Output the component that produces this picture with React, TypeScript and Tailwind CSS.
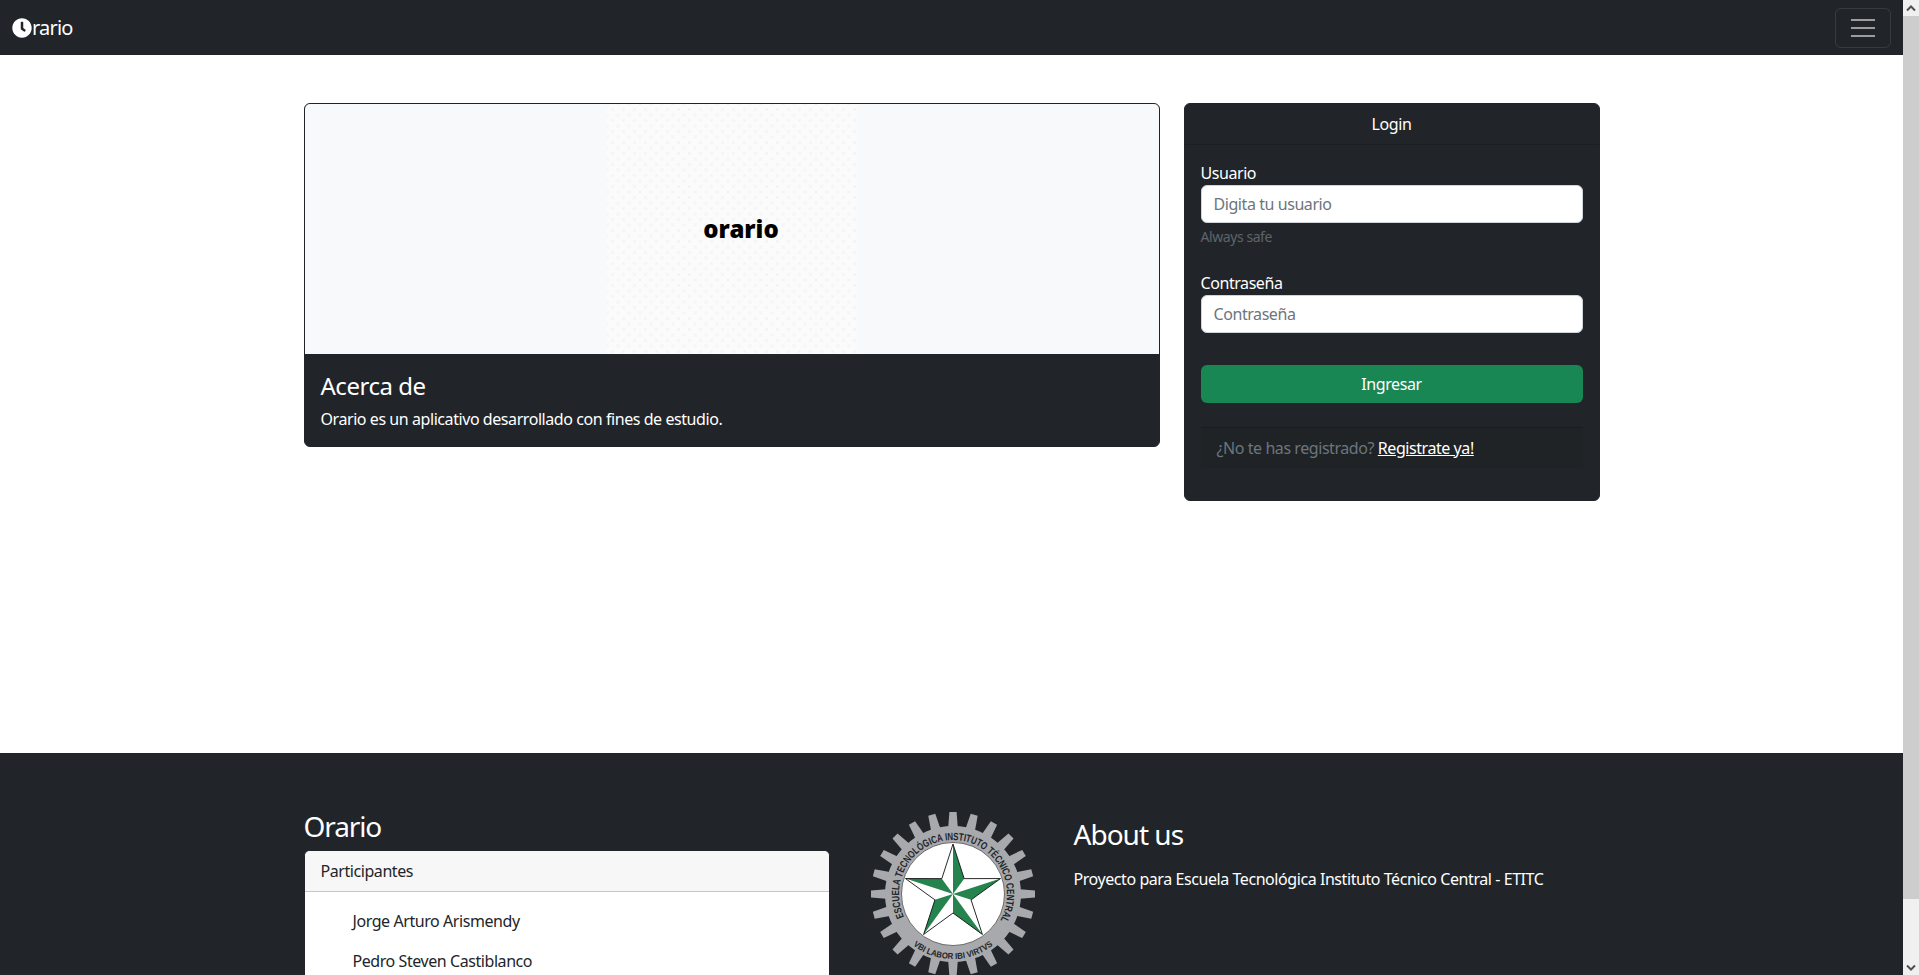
import { FaClock } from "react-icons/fa";

const cx = 85;
const cy = 85;
const pt = (r: number, deg: number): [number, number] => {
  const a = (deg * Math.PI) / 180;
  return [cx + r * Math.cos(a), cy + r * Math.sin(a)];
};
const p2s = (ps: [number, number][]) => ps.map((p) => p.map((v) => v.toFixed(2)).join(",")).join(" ");

function Logo() {
  const teeth = Array.from({ length: 24 }, (_, i) => i * 15);
  const starAngles = [-90, -18, 54, 126, 198];
  const R = 50;
  const r = 19;
  const starOutline: [number, number][] = [];
  starAngles.forEach((a) => {
    starOutline.push(pt(R, a));
    starOutline.push(pt(r, a + 36));
  });
  return (
    <svg width="170" height="170" viewBox="0 0 170 170" className="shrink-0">
      {teeth.map((d) => (
        <polygon key={d} points={`${cx - 5},${cy - 64} ${cx - 3.6},${cy - 82} ${cx + 3.6},${cy - 82} ${cx + 5},${cy - 64}`} fill="#a7a9ac" transform={`rotate(${d} ${cx} ${cy})`} />
      ))}
      <circle cx={cx} cy={cy} r="68" fill="#a7a9ac" />
      <circle cx={cx} cy={cy} r="51.5" fill="#ffffff" stroke="#222" strokeWidth="0.6" />
      {starAngles.map((a) => (
        <polygon key={a} points={p2s([[cx, cy], pt(R, a), pt(r, a + 36)])} fill="#25834e" />
      ))}
      <polygon points={p2s(starOutline)} fill="none" stroke="#111" strokeWidth="0.9" />
      <defs>
        <path id="ringTop" d={`M ${pt(54, 155).join(" ")} A 54 54 0 1 1 ${pt(54, 27).join(" ")}`} />
        <path id="ringBottom" d={`M ${pt(65, 128).join(" ")} A 65 65 0 0 0 ${pt(65, 50).join(" ")}`} />
      </defs>
      <text fontFamily="'Liberation Sans', sans-serif" fontSize="10.5" fontWeight="700" fill="#222529" letterSpacing="0">
        <textPath href="#ringTop" textLength="220" lengthAdjust="spacingAndGlyphs">ESCUELA TECNOLÓGICA INSTITUTO TÉCNICO CENTRAL</textPath>
      </text>
      <text fontFamily="'Liberation Sans', sans-serif" fontSize="8.5" fontWeight="700" fill="#222529" letterSpacing="0">
        <textPath href="#ringBottom" textLength="86" lengthAdjust="spacingAndGlyphs">VBI LABOR IBI VIRTVS</textPath>
      </text>
    </svg>
  );
}

function Scrollbar() {
  return (
    <div className="flex w-[16px] shrink-0 flex-col bg-[#f0f0f0]">
      <div className="flex h-[16px] items-center justify-center">
        <svg width="10" height="7" viewBox="0 0 10 7"><path d="M1 5.5 5 1.5 9 5.5" fill="none" stroke="#505050" strokeWidth="2" /></svg>
      </div>
      <div className="h-[883px] bg-[#cdcdcd]" />
      <div className="flex-1" />
      <div className="flex h-[16px] items-center justify-center">
        <svg width="10" height="7" viewBox="0 0 10 7"><path d="M1 1.5 5 5.5 9 1.5" fill="none" stroke="#505050" strokeWidth="2" /></svg>
      </div>
    </div>
  );
}

export default function App() {
  return (
    <div className="flex h-[975px] w-full overflow-hidden bg-white font-['Noto_Sans',sans-serif] text-[16px] leading-[24px] tracking-[-0.027em] text-[#212529]">
      <div className="min-w-0 flex-1 overflow-hidden">
        <nav className="flex h-[55px] items-center justify-between bg-[#212529] pl-3 pr-3 text-white">
          <a className="flex items-center text-[20px] tracking-[-0.04em]">
            <FaClock className="h-5 w-5 text-white" />
            <span>rario</span>
          </a>
          <button className="flex h-[40px] w-[56px] flex-col items-center justify-center gap-[6px] rounded-md border border-white/10">
            <span className="h-[2px] w-6 bg-white/55" />
            <span className="h-[2px] w-6 bg-white/55" />
            <span className="h-[2px] w-6 bg-white/55" />
          </button>
        </nav>

        <main className="h-[698px] pt-12">
          <div className="mx-auto grid w-[1296px] grid-cols-[856px_416px] gap-6">
            <section className="self-start overflow-hidden rounded-md border border-[#212529] bg-[#212529] text-white">
              <div className="flex h-[250px] justify-center bg-[#f8f9fa]">
                <div className="flex w-[250px] items-center justify-center bg-[#fbfbfb] bg-[radial-gradient(#f5f5f5_1.5px,transparent_2px),radial-gradient(#f5f5f5_1.5px,transparent_2px)] bg-[length:11px_11px] bg-[position:0_0,5.5px_5.5px]">
                  <span className="ml-[19px] text-[24px] font-black tracking-normal text-black">orario</span>
                </div>
              </div>
              <div className="px-4 pb-[15px] pt-[17px]">
                <h5 className="mb-[7px] text-[24px] leading-[29px] tracking-[-0.02em]">Acerca de</h5>
                <p>Orario es un aplicativo desarrollado con fines de estudio.</p>
              </div>
            </section>

            <section className="h-[398px] rounded-md border border-[#212529] bg-[#212529] text-white">
              <div className="h-[41px] border-b border-black/15 py-2 text-center">Login</div>
              <div className="px-4 pt-4">
                <label className="block">Usuario</label>
                <input className="block h-[38px] w-full rounded-md border border-[#ced4da] bg-white px-3 text-[#212529] placeholder:text-[#6c757d]" placeholder="Digita tu usuario" />
                <div className="mt-[3px] text-[14px] leading-[21px] text-[#6c757d] opacity-80">Always safe</div>
                <label className="mt-[24px] block">Contraseña</label>
                <input className="block h-[38px] w-full rounded-md border border-[#ced4da] bg-white px-3 text-[#212529] placeholder:text-[#6c757d]" placeholder="Contraseña" />
                <button className="mt-8 h-[38px] w-full rounded-md bg-[#198754] text-center text-white">Ingresar</button>
                <div className="mt-6 h-[41px] border-t border-black/15 bg-black/5 px-4 py-2 text-[#6c757d]">
                  ¿No te has registrado? <a className="text-white underline">Registrate ya!</a>
                </div>
              </div>
            </section>
          </div>
        </main>

        <footer className="h-[222px] overflow-hidden bg-[#212529] pt-[56px] text-white">
          <div className="mx-auto grid w-[1320px] grid-cols-[550px_220px_550px]">
            <div className="px-3">
              <h3 className="mb-[7px] text-[28px] leading-[34px] tracking-[-0.04em]">Orario</h3>
              <div className="overflow-hidden rounded-md border border-[#212529] bg-white text-[#212529]">
                <div className="h-[41px] border-b border-black/20 bg-[#f7f7f7] px-4 py-2">Participantes</div>
                <ul className="pl-12 pt-[17px]">
                  <li className="h-[40px]">Jorge Arturo Arismendy</li>
                  <li className="h-[40px]">Pedro Steven Castiblanco</li>
                </ul>
              </div>
            </div>
            <div className="flex justify-center pl-[2px]">
              <Logo />
            </div>
            <div className="px-3 pt-2">
              <h3 className="mb-[16px] text-[28px] leading-[34px] tracking-[-0.035em]">About us</h3>
              <p>Proyecto para Escuela Tecnológica Instituto Técnico Central - ETITC</p>
            </div>
          </div>
        </footer>
      </div>
      <Scrollbar />
    </div>
  );
}
